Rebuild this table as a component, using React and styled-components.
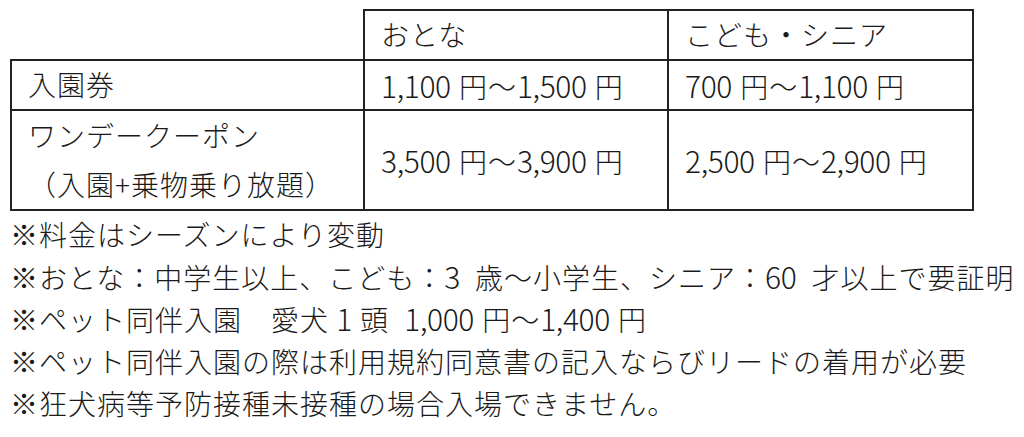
import React from "react";
import styled, { createGlobalStyle } from "styled-components";

const GlobalStyle = createGlobalStyle`
  html, body {
    margin: 0;
    padding: 0;
    background: #ffffff;
  }
  body {
    font-family: "Noto Sans CJK JP", "Noto Sans", sans-serif;
    color: #1a1a1a;
  }
`;

const Page = styled.div`
  padding: 9px 10px 0 10px;
  font-size: 28px;
  font-weight: 300;
  letter-spacing: 1px;
`;

const PriceTable = styled.table`
  border-collapse: collapse;
  table-layout: fixed;
  width: 962px;
`;

const Cell = styled.td`
  border: 2px solid #222;
  padding: 0 0 0 16px;
  height: ${({ $tall }) => ($tall ? "98px" : "48px")};
  line-height: 1.2;
  vertical-align: middle;
  text-align: left;
  font-weight: 300;
  white-space: nowrap;
  &.corner {
    border-top: hidden;
    border-left: hidden;
  }
`;

const Sub = styled.div`
  line-height: 49px;
`;

// numbers in the source doc are set a bit larger than the kana
const Num = styled.span`
  font-size: 30px;
  font-weight: 300;
  letter-spacing: -0.4px;
  margin-right: 1px;
  margin-left: ${({ $gap }) => ($gap ? "8px" : "0")};
`;

const Notes = styled.div`
  margin-top: 3px;
  line-height: 41.7px;
  white-space: nowrap;
`;

const Note = styled.div`
  word-spacing: ${({ $wide }) => ($wide ? "7px" : "0")};
`;

const App = () => {
  return (
    <>
      <GlobalStyle />
      <Page>
        <PriceTable>
          <colgroup>
            <col style={{ width: "353px" }} />
            <col style={{ width: "304px" }} />
            <col style={{ width: "305px" }} />
          </colgroup>
          <tbody>
            <tr>
              <Cell className="corner"></Cell>
              <Cell>おとな</Cell>
              <Cell>こども・シニア</Cell>
            </tr>
            <tr>
              <Cell>入園券</Cell>
              <Cell>
                <Num>1,100</Num> 円～<Num>1,500</Num> 円
              </Cell>
              <Cell>
                <Num>700</Num> 円～<Num>1,100</Num> 円
              </Cell>
            </tr>
            <tr>
              <Cell $tall>
                <Sub>ワンデークーポン</Sub>
                <Sub>（入園+乗物乗り放題）</Sub>
              </Cell>
              <Cell $tall>
                <Num>3,500</Num> 円～<Num>3,900</Num> 円
              </Cell>
              <Cell $tall>
                <Num>2,500</Num> 円～<Num>2,900</Num> 円
              </Cell>
            </tr>
          </tbody>
        </PriceTable>
        <Notes>
          <Note>※料金はシーズンにより変動</Note>
          <Note $wide>
            ※おとな：中学生以上、こども：<Num>3</Num> 歳～小学生、シニア：<Num>60</Num> 才以上で要証明
          </Note>
          <Note>
            ※ペット同伴入園　愛犬 <Num>1</Num> 頭 <Num $gap>1,000</Num> 円～<Num>1,400</Num> 円
          </Note>
          <Note>※ペット同伴入園の際は利用規約同意書の記入ならびリードの着用が必要</Note>
          <Note>※狂犬病等予防接種未接種の場合入場できません。</Note>
        </Notes>
      </Page>
    </>
  );
};

export default App;
